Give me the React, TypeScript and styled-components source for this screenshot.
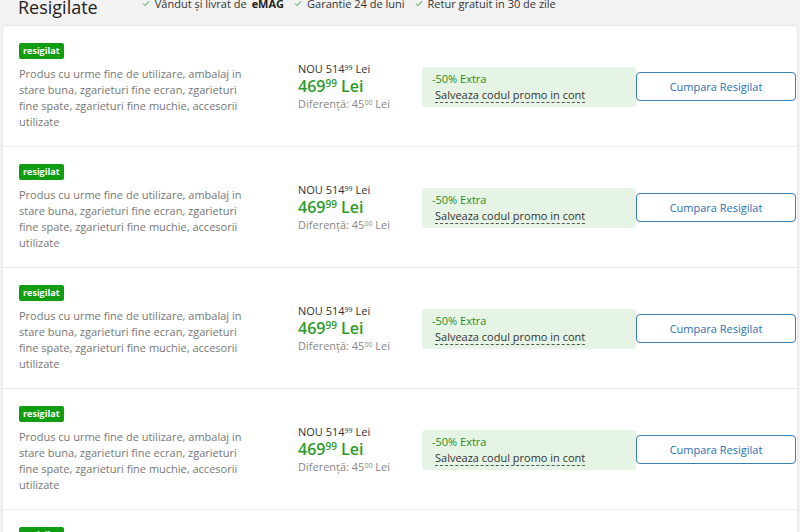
import React from "react";
import styled, { createGlobalStyle } from "styled-components";

const Global = createGlobalStyle`
  html, body { margin: 0; padding: 0; }
  body {
    background: #f2f2f2;
    font-family: "Open Sans", "Liberation Sans", sans-serif;
    color: #333;
    overflow: hidden;
  }
`;

const Page = styled.div`
  width: 800px;
  height: 532px;
  overflow: hidden;
`;

const Header = styled.div`
  display: flex;
  align-items: center;
  gap: 44px;
  height: 32px;
  margin-top: -7px;
  padding: 0 18px;
`;

const Title = styled.h2`
  margin: 0;
  font-size: 18px;
  font-weight: 400;
  color: #222;
  line-height: 20px;
  margin-top: -4px;
`;

const Perks = styled.ul`
  display: flex;
  gap: 10px;
  list-style: none;
  margin: 0;
  padding: 0;
  font-size: 11px;
  color: #333;
  margin-top: -11px;
`;

const Perk = styled.li`
  display: flex;
  align-items: center;
  gap: 5px;
  b { font-weight: 700; color: #222; }
`;

const Card = styled.div`
  margin: 0 2px;
  background: #fff;
  border: 1px solid #e6e6e6;
  border-radius: 4px;
`;

const Row = styled.div`
  display: flex;
  align-items: center;
  padding: 17px 0 16px 16px;
  border-bottom: 1px solid #ececec;
`;

const Left = styled.div`
  width: 232px;
  margin-right: 47px;
`;

const Badge = styled.span`
  display: block;
  width: fit-content;
  background: #119d11;
  color: #fff;
  font-size: 9px;
  font-weight: 700;
  line-height: 16px;
  padding: 0 4px;
  border-radius: 2px;
  margin-bottom: 7px;
`;

const Desc = styled.p`
  margin: 0;
  font-size: 11px;
  line-height: 16px;
  color: #777;
`;

const Price = styled.div`
  width: 124px;
  display: flex;
  flex-direction: column;
`;

const Old = styled.div`
  font-size: 11px;
  line-height: 14px;
  color: #333;
  sup { font-size: 7px; vertical-align: 3px; line-height: 0; }
`;

const Now = styled.div`
  font-size: 16px;
  font-weight: 600;
  color: #2a9b2a;
  line-height: 20px;
  sup { font-size: 10px; vertical-align: 5px; line-height: 0; }
`;

const Diff = styled.div`
  font-size: 11px;
  line-height: 16px;
  color: #888;
  sup { font-size: 7px; vertical-align: 3px; line-height: 0; }
`;

const Promo = styled.div`
  width: 214px;
  height: 40px;
  box-sizing: border-box;
  background: #e6f4e6;
  border-radius: 3px;
  padding: 4px 12px 0 10px;
  font-size: 11px;
  line-height: 16px;
`;

const PromoTitle = styled.div`
  color: #1e8c1e;
`;

const PromoLink = styled.span`
  color: #333;
  margin-left: 3px;
  border-bottom: 1px dashed #555;
`;

const Buy = styled.button`
  width: 160px;
  height: 29px;
  background: #fff;
  border: 1px solid #3a7fae;
  border-radius: 4px;
  color: #2c6fb5;
  font-family: "Open Sans", "Liberation Sans", sans-serif;
  font-size: 11px;
  cursor: pointer;
`;

const Check = () => (
  <svg width="8" height="7" viewBox="0 0 8 7">
    <path d="M1 3.6 L3 5.6 L7 1.2" fill="none" stroke="#3aa03a" strokeWidth="1" />
  </svg>
);

const desc =
  "Produs cu urme fine de utilizare, ambalaj in stare buna, zgarieturi fine ecran, zgarieturi fine spate, zgarieturi fine muchie, accesorii utilizate";

export default function App() {
  return (
    <Page>
      <Global />
      <Header>
        <Title>Resigilate</Title>
        <Perks>
          <Perk><Check />Vândut și livrat de <b>eMAG</b></Perk>
          <Perk><Check />Garantie 24 de luni</Perk>
          <Perk><Check />Retur gratuit in 30 de zile</Perk>
        </Perks>
      </Header>
      <Card>
        {[0, 1, 2, 3, 4].map((i) => (
          <Row key={i}>
            <Left>
              <Badge>resigilat</Badge>
              <Desc>{desc}</Desc>
            </Left>
            <Price>
              <Old>NOU 514<sup>99</sup> Lei</Old>
              <Now>469<sup>99</sup> Lei</Now>
              <Diff>Diferență: 45<sup>00</sup> Lei</Diff>
            </Price>
            <Promo>
              <PromoTitle>-50% Extra</PromoTitle>
              <PromoLink>Salveaza codul promo in cont</PromoLink>
            </Promo>
            <Buy>Cumpara Resigilat</Buy>
          </Row>
        ))}
      </Card>
    </Page>
  );
}
